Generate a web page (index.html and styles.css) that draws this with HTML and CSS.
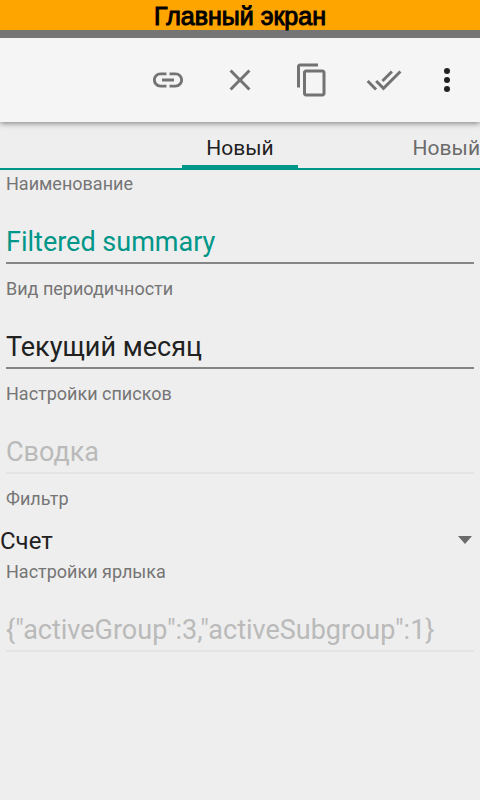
FILE: index.html
```html
<!DOCTYPE html>
<html lang="ru">
<head>
<meta charset="utf-8">
<meta name="viewport" content="width=device-width, initial-scale=1">
<title>Главный экран</title>
<link rel="stylesheet" href="styles.css">
</head>
<body>
<h1 class="banner">Главный экран</h1>
<header class="toolbar">
  <button class="action" type="button" aria-label="Ссылка">
    <svg class="icon" viewBox="0 0 24 24"><path d="M3.9 12c0-1.71 1.39-3.1 3.1-3.1h4V7H7c-2.76 0-5 2.24-5 5s2.24 5 5 5h4v-1.9H7c-1.71 0-3.1-1.39-3.1-3.1zM8 13h8v-2H8v2zm9-6h-4v1.9h4c1.71 0 3.1 1.39 3.1 3.1s-1.39 3.1-3.1 3.1h-4V17h4c2.76 0 5-2.24 5-5s-2.24-5-5-5z"/></svg>
  </button>
  <button class="action" type="button" aria-label="Закрыть">
    <svg class="icon" viewBox="0 0 24 24"><path d="M19 6.41L17.59 5 12 10.59 6.41 5 5 6.41 10.59 12 5 17.59 6.41 19 12 13.41 17.59 19 19 17.59 13.41 12z"/></svg>
  </button>
  <button class="action" type="button" aria-label="Копировать">
    <svg class="icon" viewBox="0 0 24 24"><path d="M16 1H4c-1.1 0-2 .9-2 2v14h2V3h12V1zm3 4H8c-1.1 0-2 .9-2 2v14c0 1.1.9 2 2 2h11c1.1 0 2-.9 2-2V7c0-1.1-.9-2-2-2zm0 16H8V7h11v14z"/></svg>
  </button>
  <button class="action" type="button" aria-label="Применить">
    <svg class="icon" viewBox="0 0 24 24"><path d="M18 7l-1.41-1.41-6.34 6.34 1.41 1.41L18 7zm4.24-1.41L11.66 16.17 7.48 12l-1.41 1.41L11.66 19l12-12-1.42-1.41zM.41 13.41L6 19l1.41-1.41L1.83 12 .41 13.41z"/></svg>
  </button>
  <button class="action action-more" type="button" aria-label="Ещё">
    <svg class="icon" viewBox="0 0 24 24"><circle cx="12" cy="6" r="2"/><circle cx="12" cy="12" r="2"/><circle cx="12" cy="18" r="2"/></svg>
  </button>
</header>
<nav class="tabs">
  <a class="tab tab-current" href="#current" aria-current="page">Новый</a>
  <a class="tab tab-next" href="#next">Новый</a>
</nav>
<main>
  <form class="form">
    <div class="field">
      <label class="label" for="name">Наименование</label>
      <input class="input input-accent" id="name" type="text" value="Filtered summary">
    </div>
    <div class="field">
      <label class="label" for="period">Вид периодичности</label>
      <input class="input" id="period" type="text" value="Текущий месяц">
    </div>
    <div class="field">
      <label class="label" for="lists">Настройки списков</label>
      <input class="input" id="lists" type="text" value="Сводка" disabled>
    </div>
    <div class="field field-select">
      <label class="label" for="filter">Фильтр</label>
      <div class="select-box">
        <select class="select" id="filter"><option>Счет</option></select>
        <svg class="arrow" viewBox="0 0 14 8"><path d="M0 0h14L7 8z"/></svg>
      </div>
    </div>
    <div class="field">
      <label class="label" for="shortcut">Настройки ярлыка</label>
      <input class="input" id="shortcut" type="text" value="{&quot;activeGroup&quot;:3,&quot;activeSubgroup&quot;:1}" disabled>
    </div>
  </form>
</main>
</body>
</html>
```
FILE: styles.css
```css
* {
  box-sizing: border-box;
}

body {
  margin: 0;
  min-height: 100vh;
  background: #eeeeee;
  color: #212121;
  font-family: Roboto, "Noto Sans", sans-serif;
}

.banner {
  position: relative;
  z-index: 1;
  margin: 0;
  height: 30px;
  background: #ffa500;
  color: #000;
  font: 25px/32px "Liberation Sans", Arial, sans-serif;
  -webkit-text-stroke: 1px #000;
  text-align: center;
}

.toolbar {
  display: flex;
  justify-content: flex-end;
  padding-right: 6px;
  border-top: 8px solid #757575;
  background: #f5f5f5;
  box-shadow: 0 1px 6px rgba(0, 0, 0, 0.5);
}

.action {
  display: flex;
  align-items: center;
  justify-content: center;
  width: 72px;
  height: 84px;
  padding: 0;
  border: 0;
  background: none;
  color: #737373;
}

.action-more {
  width: 54px;
  color: #212121;
}

.icon {
  width: 36px;
  height: 36px;
  fill: currentColor;
}

.tabs {
  display: grid;
  grid-template-columns: 1fr auto 1fr;
  height: 48px;
  border-bottom: 2px solid #009688;
  overflow: hidden;
}

.tab {
  padding: 0 24px;
  color: #6b6b6b;
  font-size: 21px;
  line-height: 52px;
  text-decoration: none;
}

.tab-current {
  grid-column: 2;
  height: 46px;
  border-bottom: 3px solid #009688;
  color: #212121;
}

.tab-next {
  justify-self: end;
  margin-right: -24px;
}

.form {
  padding-top: 3px;
}

.field {
  display: flex;
  flex-direction: column;
  gap: 26px;
  padding: 0 6px 14px;
}

.label {
  color: #757575;
  font-size: 18px;
  line-height: 21px;
}

.input {
  width: 100%;
  height: 44px;
  padding: 2px 0 0;
  border: 0;
  border-bottom: 2px solid #858585;
  border-radius: 0;
  background: none;
  color: #212121;
  font: 27px/32px Roboto, "Noto Sans", sans-serif;
  outline: 0;
}

.input-accent {
  color: #009688;
}

.input:disabled {
  border-color: #e4e4e4;
  color: #bababa;
}

.field-select {
  gap: 10px;
  padding-bottom: 0;
}

.select-box {
  display: flex;
  align-items: center;
  margin-left: -6px;
}

.select {
  flex: 1;
  height: 42px;
  padding: 2px 0 0;
  border: 0;
  background: none;
  color: #212121;
  font: 24px/32px Roboto, "Noto Sans", sans-serif;
  appearance: none;
  outline: 0;
}

.arrow {
  width: 14px;
  height: 8px;
  margin-right: 2px;
  fill: #6b6b6b;
}
```
